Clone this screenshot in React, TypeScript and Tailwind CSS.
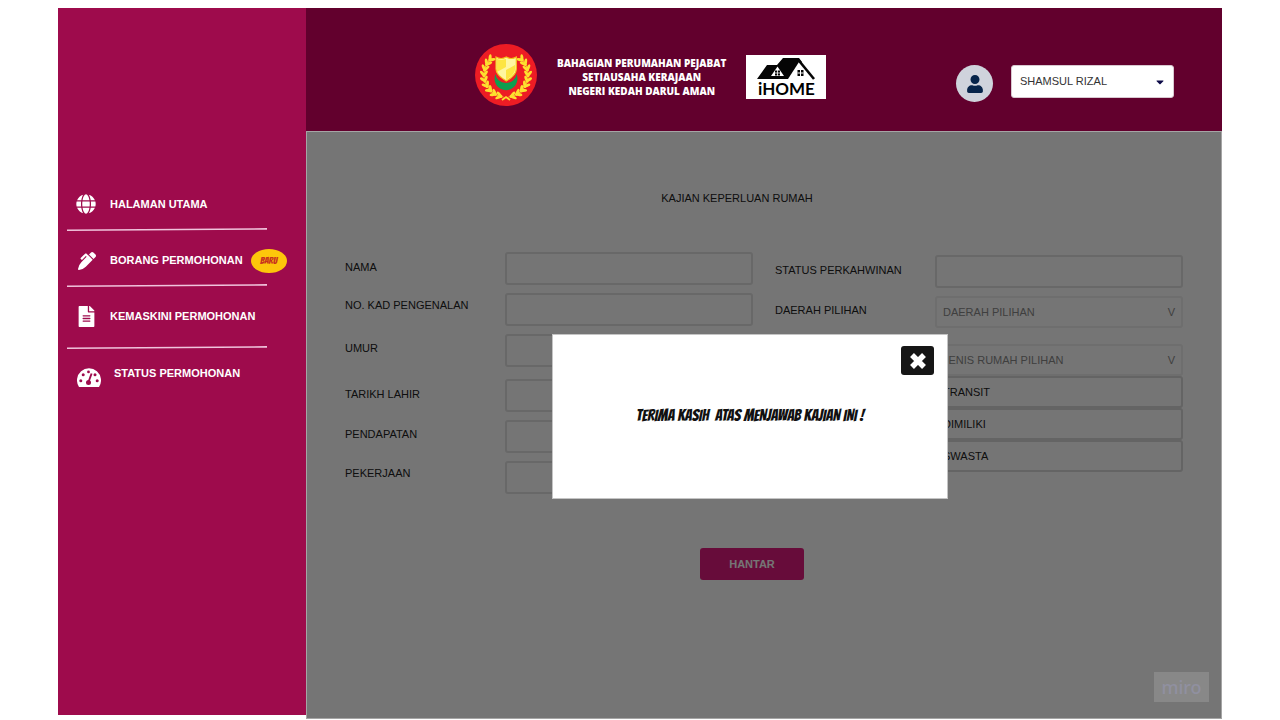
import { useState } from "react";
import type { ReactNode } from "react";
import { FaCaretDown, FaFileAlt, FaGlobe, FaPenAlt, FaUser } from "react-icons/fa";

const leafAngles = [14, 29, 44, 59, 74, 89, 104, 119, 133];

function KedahEmblem() {
  return (
    <svg viewBox="0 0 62 62" className="size-[62px] shrink-0" role="img" aria-label="Lambang Kedah">
      <circle cx="31" cy="31" r="31" fill="#ed1c24" />
      <path d="M27 56l4-3 4 3" fill="none" stroke="#fde02f" strokeWidth="1.800" />
      {[1, -1].map((side) => (
        <g key={side} fill="#fde02f" transform={side === 1 ? undefined : "translate(62 0) scale(-1 1)"}>
          {leafAngles.map((a) => (
            <g key={a} transform={`rotate(${-a} 31 31) translate(31 53)`}>
              <ellipse cx="2" cy="0" rx="3.800" ry="1.500" transform="rotate(-38)" />
              <ellipse cx="2" cy="0" rx="3.800" ry="1.500" transform="rotate(38)" />
              <path d="M-3 -.4h5v.8h-5z" />
            </g>
          ))}
        </g>
      ))}
      <path d="M20.500 30a11.500 11.500 0 1 0 21 0 10.500 9 0 0 1-21 0z" fill="#0f9d4f" />
      <path d="M21 13q5 3 10.300 0q5 3 10 0v12c0 5-5 9-10 12-5-3-10.300-7-10.300-12z" fill="#fff6a0" stroke="#f3c51c" strokeWidth="1.200" />
      <path d="M22 15q4 1.500 9 0v8l-9 5z" fill="#fde541" />
      <path d="M31 26l9-5v4c0 4-4 8-9 11z" fill="#fde541" />
    </svg>
  );
}

function GaugeIcon() {
  return (
    <svg viewBox="0 0 24 19" className="mt-2 h-[19px] w-6" aria-hidden="true">
      <path d="M2 19a12 12 0 1 1 20 0z" fill="#fff" />
      <g fill="#9e0b4c">
        <circle cx="3.800" cy="12.800" r="1.500" />
        <circle cx="6.200" cy="6.800" r="1.500" />
        <circle cx="11.500" cy="3.900" r="1.400" />
        <circle cx="18" cy="6.800" r="1.500" />
        <circle cx="20.200" cy="12.800" r="1.500" />
        <circle cx="11.500" cy="14.500" r="2.500" />
      </g>
      <path d="M11.500 14L14.600 5.500" stroke="#9e0b4c" strokeWidth="1.900" />
    </svg>
  );
}

function HomeLogo() {
  return (
    <div className="mt-1 flex h-11 w-20 shrink-0 flex-col items-center bg-white pt-[3px]">
      <svg viewBox="0 0 58 22" className="h-[22px] w-[58px] shrink-0" aria-hidden="true">
        <path d="M0 21L10 7h10l6-7h16l3 4L32 21z" fill="#050505" />
        <path d="M42 4L31 21h24z" fill="#fff" />
        <path d="M41 1.500L57 21" stroke="#050505" strokeWidth="2.600" />
        <path d="M20.500 8.500L14 18h13z" fill="#fff" />
        <path d="M18 12.500h5v5h-5z" fill="#050505" />
        <path d="M20.500 12v6M17.500 15h6" stroke="#fff" strokeWidth="0.800" />
        <path d="M40.500 12h6v6h-6z" fill="#050505" />
        <path d="M43.500 12v6M40.500 15h6" stroke="#fff" strokeWidth="1" />
      </svg>
      <span className="font-[Lato,sans-serif] text-[17px] leading-[18px] font-bold text-black">iHOME</span>
    </div>
  );
}

function Divider() {
  return (
    <svg viewBox="0 0 200 3" preserveAspectRatio="none" className="ml-[9px] block h-[3px] w-[200px]" aria-hidden="true">
      <path d="M0 2.200L200 0.900" stroke="#f0c4dc" strokeWidth="1.600" />
    </svg>
  );
}

function NavItem({ icon, label, className, badge }: { icon: ReactNode; label: string; className: string; badge?: string }) {
  return (
    <a href="#" className={`flex items-center font-bold text-white ${className}`}>
      <span className="flex w-[30px] shrink-0 justify-center">{icon}</span>
      <span className="whitespace-nowrap">{label}</span>
      {badge && (
        <span className="flex h-6 w-9 shrink-0 items-center justify-center rounded-[50%] bg-[#fdc60b] font-[Bangers,Roboto,sans-serif] text-[10px] font-normal text-[#c8321e]">
          {badge}
        </span>
      )}
    </a>
  );
}

function Field({ id, label, labelClass = "pb-1" }: { id: string; label: string; labelClass?: string }) {
  return (
    <div className="flex items-center">
      <label htmlFor={id} className={`w-40 shrink-0 ${labelClass}`}>{label}</label>
      <input id={id} type="text" className="h-[33px] min-w-0 flex-1 rounded-[3px] border-2 border-[#e2e2e2] bg-white px-2" />
    </div>
  );
}

function Picker({ id, text }: { id: string; text: string }) {
  return (
    <div className="relative min-w-0 flex-1">
      <select id={id} aria-label={text} className="h-8 w-full appearance-none rounded-[3px] border-2 border-[#efefef] bg-white px-1.5 text-[#8a8a8a]">
        <option>{text}</option>
      </select>
      <span className="pointer-events-none absolute inset-y-0 right-2 flex items-center text-[#8a8a8a]">V</span>
    </div>
  );
}

export default function App() {
  const [open, setOpen] = useState(true);

  return (
    <div className="flex min-h-screen bg-white px-[58px] pt-2 font-['Liberation_Sans',Arial,sans-serif] text-[11px]">
      <aside className="mb-[5px] w-62 shrink-0 bg-[#9e0b4c] pt-[172px]">
        <nav>
          <NavItem className="h-12 gap-[9px] pl-[13px]" icon={<FaGlobe className="size-5" />} label="HALAMAN UTAMA" />
          <Divider />
          <NavItem className="h-[53px] gap-2 pt-1.5 pl-3.5" icon={<FaPenAlt className="size-[18px]" />} label="BORANG PERMOHONAN" badge="BARU" />
          <Divider />
          <NavItem className="h-[59px] gap-[9px] pl-[13px]" icon={<FaFileAlt className="size-[21px]" />} label="KEMASKINI PERMOHONAN" />
          <Divider />
          <NavItem className="h-12 gap-2.5 pl-4" icon={<GaugeIcon />} label="STATUS PERMOHONAN" />
        </nav>
      </aside>

      <div className="flex min-w-0 flex-1 flex-col">
        <header className="flex h-[123px] items-start bg-[#62002d] pr-12 pl-[169px]">
          <div className="mt-9 flex items-center gap-5">
            <KedahEmblem />
            <p className="mt-1 text-center font-['Open_Sans',sans-serif] text-[10px] leading-[14px] font-extrabold whitespace-nowrap text-white">
              BAHAGIAN PERUMAHAN PEJABAT
              <br />
              SETIAUSAHA KERAJAAN
              <br />
              NEGERI KEDAH DARUL AMAN
            </p>
            <HomeLogo />
          </div>
          <div className="mt-[57px] ml-auto flex items-start gap-[18px]">
            <span className="flex size-[37px] items-center justify-center rounded-full bg-[#cfd3dc]">
              <FaUser className="size-[18px] text-[#06244a]" />
            </span>
            <div className="relative">
              <select aria-label="Pengguna" className="h-[33px] w-[163px] appearance-none rounded-[3px] border border-[#d8c8d0] bg-white px-2 text-[#333]">
                <option>SHAMSUL RIZAL</option>
              </select>
              <FaCaretDown className="pointer-events-none absolute top-[11px] right-2 size-3 text-[#0c0a48]" />
            </div>
          </div>
        </header>

        <main className="relative mb-px flex-1 border border-[#a5a5a5] bg-white px-[38px] pt-[58px] pb-14 text-[#222]">
          <h1 className="pr-[54px] text-center leading-4">KAJIAN KEPERLUAN RUMAH</h1>
          <form onSubmit={(e) => e.preventDefault()}>
            <div className="mt-[46px] grid grid-cols-2 gap-[22px]">
              <div className="flex flex-col gap-2">
                <Field id="nama" label="NAMA" labelClass="pb-0.5" />
                <Field id="kad" label="NO. KAD PENGENALAN" labelClass="pb-2" />
                <Field id="umur" label="UMUR" />
                <div className="mt-1 flex flex-col gap-2">
                  <Field id="lahir" label="TARIKH LAHIR" labelClass="pb-0.5" />
                  <Field id="pendapatan" label="PENDAPATAN" />
                  <Field id="pekerjaan" label="PEKERJAAN" labelClass="pb-2" />
                </div>
              </div>
              <div className="flex flex-col pt-[3px]">
                <Field id="status" label="STATUS PERKAHWINAN" labelClass="pb-0.5" />
                <div className="mt-2 flex items-center">
                  <label htmlFor="daerah" className="w-40 shrink-0 pb-1">DAERAH PILIHAN</label>
                  <Picker id="daerah" text="DAERAH PILIHAN" />
                </div>
                <div className="mt-4 ml-40">
                  <Picker id="jenis" text="JENIS RUMAH PILIHAN" />
                  <ul>
                    {["TRANSIT", "DIMILIKI", "SWASTA"].map((name) => (
                      <li key={name}>
                        <button type="button" className="block h-8 w-full rounded-[3px] border-2 border-[#dadada] px-1.5 text-left">{name}</button>
                      </li>
                    ))}
                  </ul>
                </div>
              </div>
            </div>
            <div className="mt-[54px] flex justify-center pr-6">
              <button type="submit" className="h-8 w-[104px] rounded-[3px] bg-[#e01c7e] font-bold text-white">HANTAR</button>
            </div>
          </form>

          {open && (
            <div className="absolute inset-0 flex items-start justify-center bg-black/54 pt-[202px] pr-7">
              <div role="dialog" aria-modal="true" className="h-[165px] w-[396px] border border-[#c4c4c4] bg-white px-[13px] pt-[11px]">
                <div className="flex justify-end">
                  <button type="button" aria-label="Tutup" onClick={() => setOpen(false)} className="flex h-[29px] w-[33px] items-center justify-center rounded-[3px] bg-[#161616]">
                    <svg viewBox="0 0 18 18" className="size-[18px]" aria-hidden="true">
                      <path d="M3 3L15 15M15 3L3 15" stroke="#fff" strokeWidth="5.500" />
                    </svg>
                  </button>
                </div>
                <p className="mt-[31px] text-center font-[Bangers,Roboto,sans-serif] text-base leading-5 whitespace-pre text-[#111]">
                  {"TERIMA KASIH  ATAS MENJAWAB KAJIAN INI !"}
                </p>
              </div>
            </div>
          )}
          <div className="absolute right-3 bottom-4 flex h-[30px] w-[55px] items-center justify-center bg-[#888] font-['Noto_Sans',sans-serif] text-lg leading-5 font-medium text-[#9090a0]">
            miro
          </div>
        </main>
      </div>
    </div>
  );
}
